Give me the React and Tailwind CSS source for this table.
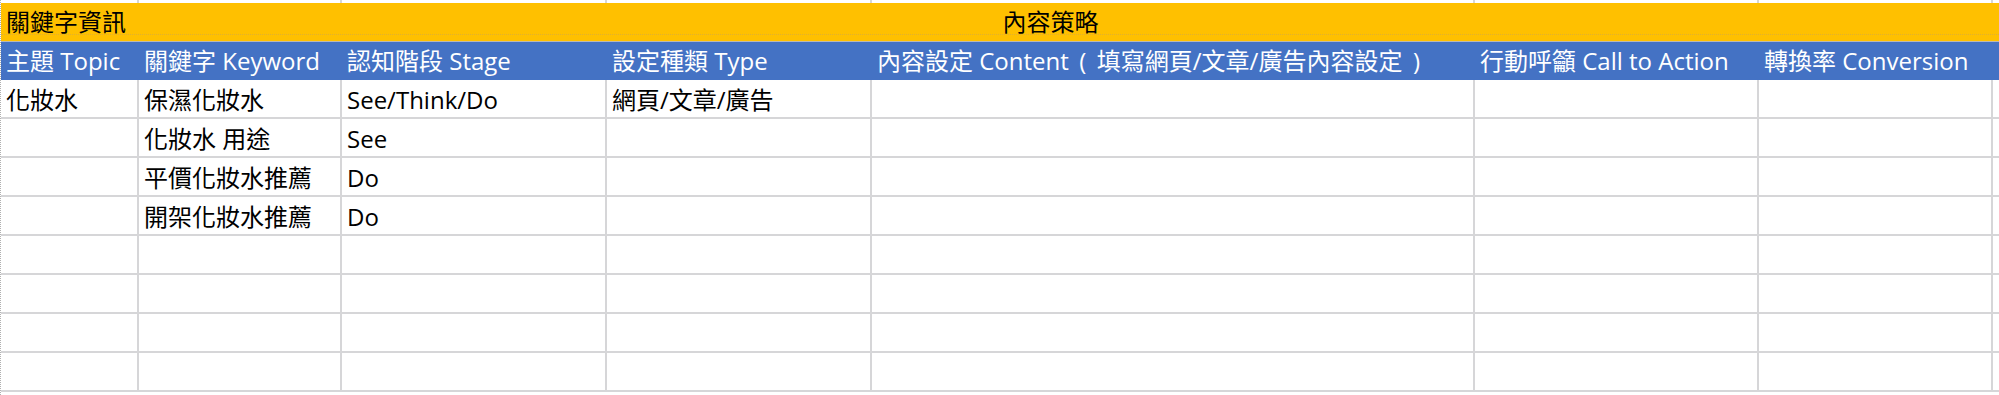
const COLS = 'grid grid-cols-[138px_203px_265px_265px_603px_284px_234px_1fr]'

const Paren = ({ children }) => (
  <span className="inline-block w-[28px] text-center">{children}</span>
)

const HEADERS = [
  '主題 Topic',
  '關鍵字 Keyword',
  '認知階段 Stage',
  '設定種類 Type',
  <>內容設定 Content<Paren>(</Paren>填寫網頁/文章/廣告內容設定<Paren>)</Paren></>,
  '行動呼籲 Call to Action',
  '轉換率 Conversion',
]

const ROWS = [
  ['化妝水', '保濕化妝水', 'See/Think/Do', '網頁/文章/廣告', '', '', ''],
  ['', '化妝水 用途', 'See', '', '', '', ''],
  ['', '平價化妝水推薦', 'Do', '', '', '', ''],
  ['', '開架化妝水推薦', 'Do', '', '', '', ''],
  ['', '', '', '', '', '', ''],
  ['', '', '', '', '', '', ''],
  ['', '', '', '', '', '', ''],
  ['', '', '', '', '', '', ''],
]

function Row({ cells }) {
  return (
    <div className={`${COLS} h-[39px] border-b-2 border-[#d6d6d8]`}>
      {cells.map((c, i) => (
        <div key={i} className="flex items-center pl-[5px] pt-[2px] border-r-2 border-[#d6d6d8] whitespace-nowrap overflow-hidden">
          {c}
        </div>
      ))}
      <div />
    </div>
  )
}

export default function App() {
  return (
    <div
      className="w-[1999px] h-[395px] overflow-hidden bg-white text-black text-[24px] leading-none border-l border-dotted border-[#b0b0b0]"
      style={{ fontFamily: '"Open Sans", "Noto Sans CJK TC", sans-serif' }}
    >
      {/* strip of the row above */}
      <div className={`${COLS} h-[3px]`}>
        {HEADERS.map((_, i) => (
          <div key={i} className="border-r-2 border-[#d6d6d8]" />
        ))}
        <div />
      </div>

      {/* group header */}
      <div className="relative grid grid-cols-[341px_1417px_1fr] h-[39px] bg-[#ffc000] border-b border-[#b8b8b8]">
        <div className="flex items-center pl-[5px]">關鍵字資訊</div>
        <div className="flex items-center justify-center">內容策略</div>
        <div />
        <div className="absolute left-0 right-0 bottom-[6px] border-b border-dotted border-[#e0b030]" />
      </div>

      {/* column header */}
      <div className={`${COLS} h-[38px] bg-[#4472c4] text-white`}>
        {HEADERS.map((h, i) => (
          <div key={i} className="flex items-center pl-[5px] whitespace-nowrap">
            {h}
          </div>
        ))}
        <div />
      </div>

      {ROWS.map((r, i) => (
        <Row key={i} cells={r} />
      ))}
    </div>
  )
}
